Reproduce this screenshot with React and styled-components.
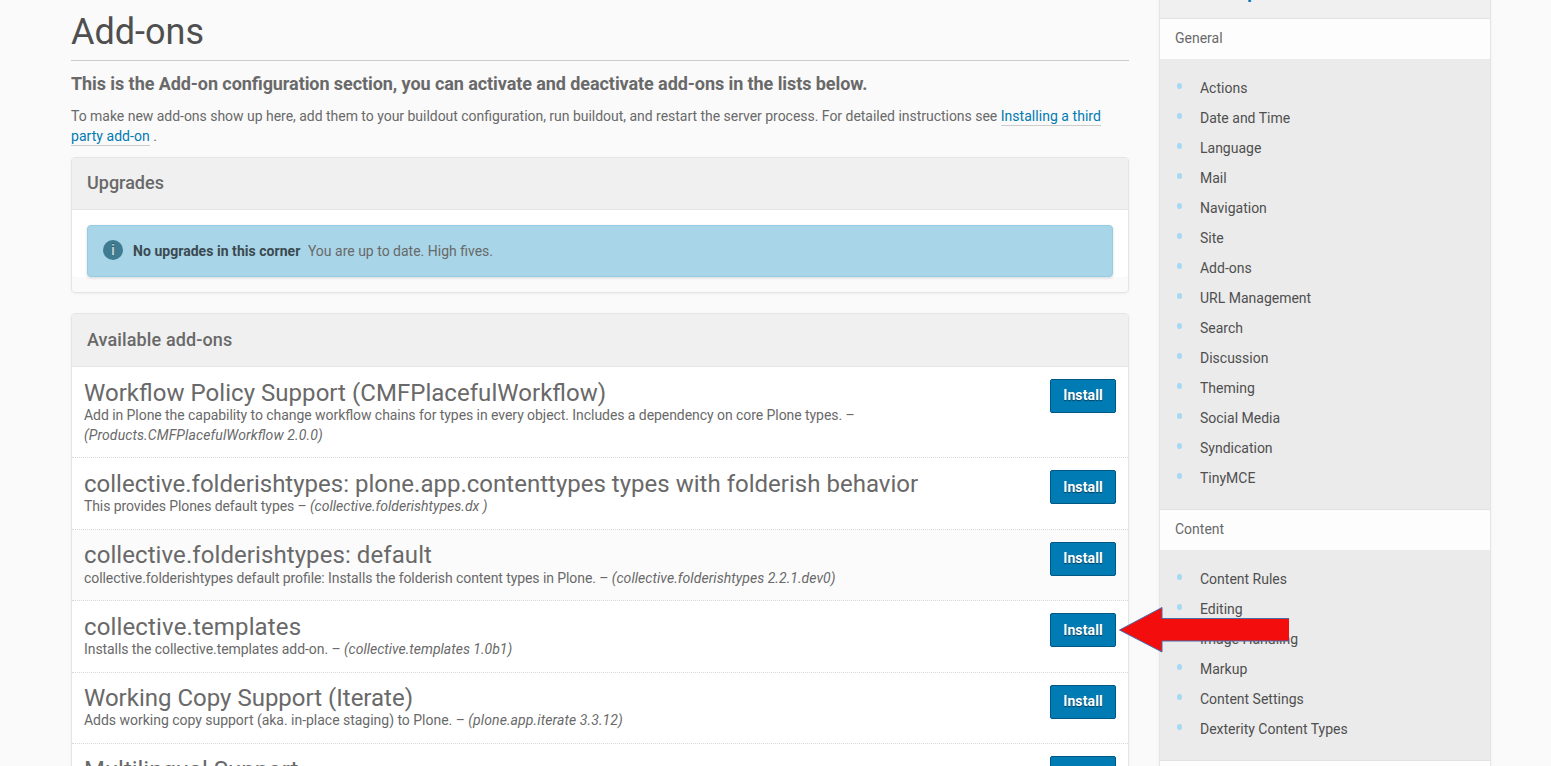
import React from "react";
import styled, { createGlobalStyle } from "styled-components";

const GlobalStyle = createGlobalStyle`
  * { box-sizing: border-box; }
  html, body { margin: 0; height: 100%; overflow: hidden; background: #fafafa; }
  body {
    font-family: Roboto, "Liberation Sans", sans-serif;
    font-size: 14px;
    line-height: 20px;
    color: #696969;
    font-feature-settings: "liga" 1;
  }
`;

const Page = styled.div`
  position: relative;
  display: flex;
  align-items: flex-start;
  gap: 30px;
  width: 1551px;
  height: 766px;
  padding-left: 71px;
  overflow: hidden;
`;

const Main = styled.main`
  width: 1058px;
  flex: none;
`;

const Title = styled.h1`
  margin: 0;
  height: 61px;
  padding-top: 12px;
  border-bottom: 1px solid #ccc;
  font-size: 36px;
  line-height: 40px;
  font-weight: 400;
  color: #4f4f4f;
`;

const Lead = styled.p`
  margin: 10px 0;
  font-size: 18px;
  line-height: 25px;
  font-weight: 700;
  letter-spacing: -0.074px;
`;

const Intro = styled.p`
  margin: 0 0 11px;
  letter-spacing: -0.025px;
`;

const Link = styled.a`
  color: #007bb3;
  text-decoration: none;
  border-bottom: 1px solid #ccc;
  padding-bottom: 1px;
  letter-spacing: 0.04px;
`;

const Panel = styled.section`
  margin-bottom: 20px;
  border: 1px solid #e5e5e5;
  border-radius: 4px;
  box-shadow: 0 1px 3px rgba(0, 0, 0, 0.05);
`;

const PanelHeader = styled.header`
  height: ${(p) => (p.$tall ? 53 : 52)}px;
  padding: ${(p) => (p.$tall ? 16 : 15)}px 15px 0;
  border-bottom: 1px solid #e5e5e5;
  border-radius: 3px 3px 0 0;
  background: #f0f0f0;
  font-size: 18px;
  line-height: 20px;
  font-weight: 500;
  letter-spacing: ${(p) => (p.$tall ? 0.12 : 0)}px;
`;

const UpgradeBody = styled.div`
  padding: 15px 15px 0;
  margin-bottom: 15px;
  background: #fff;
  border-radius: 0 0 4px 4px;
`;

const Alert = styled.div`
  display: flex;
  align-items: center;
  height: 52px;
  padding: 0 15px;
  border: 1px solid #95cbe3;
  border-radius: 4px;
  background: #a8d5e8;
  box-shadow: 0 1px 3px rgba(0, 0, 0, 0.15);
`;

const InfoBadge = styled.span`
  width: 20px;
  height: 20px;
  margin: -2px 10px 0 0;
  border-radius: 50%;
  background: #3f7b91;
  color: #eee;
  text-align: center;
  text-shadow: 0 -1px 0 rgba(0, 0, 0, 0.4);
`;

const AlertTitle = styled.strong`
  margin-right: 7.5px;
  color: #3b4a50;
  letter-spacing: 0.04px;
`;

const AddonList = styled.ul`
  margin: 0;
  padding: 0;
  list-style: none;
  background: #fff;
`;

const AddonRow = styled.li`
  display: flex;
  justify-content: space-between;
  align-items: flex-start;
  padding: 12px;
  border-bottom: 1px dotted #d9d9d9;
  background: ${(p) => (p.$hovered ? "#fbfbfb" : "#fff")};
`;

const AddonText = styled.div`
  width: 860px;
  padding-bottom: 0.6px;
`;

const AddonName = styled.h3`
  margin: 0;
  padding-top: 0.6px;
  font-size: 24px;
  line-height: 26.4px;
  font-weight: 400;
  white-space: nowrap;
  letter-spacing: ${(p) => p.$tracking}px;
`;

const AddonSummary = styled.p`
  width: 800px;
  margin: -1.2px 0 0;
  letter-spacing: ${(p) => p.$tracking}px;
`;

const AddonVersion = styled.em`
  letter-spacing: ${(p) => p.$tracking}px;
`;

const InstallButton = styled.button`
  width: 66px;
  height: 34px;
  padding: 0 0 1.2px;
  border: 1px solid #005985;
  border-radius: 2px;
  background: #007bb3;
  color: #fff;
  font: 700 14px/20px Roboto, sans-serif;
  letter-spacing: 0.12px;
  text-shadow: 0 1px 1px rgba(0, 0, 0, 0.5);
`;

const Sidebar = styled.aside`
  width: 332px;
  flex: none;
  margin-top: -34px;
  border: 1px solid #e5e5e5;
  border-top: 0;
  background: #ebebeb;
  box-shadow: 0 1px 3px rgba(0, 0, 0, 0.05);
`;

const SidebarTitle = styled.div`
  height: 52px;
  padding: 16px 15px 0;
  background: #f0f0f0;
  color: #007bb3;
  font-size: 18px;
  line-height: 20px;
  font-weight: 700;
  letter-spacing: -0.1px;
`;

const GroupHeading = styled.div`
  height: 41px;
  padding: 9px 15px;
  border-top: 1px solid #e2e2e2;
  background: #fdfdfd;
`;

const GroupList = styled.ul`
  margin: 0;
  padding: 14px 15px 16px;
  list-style: none;
`;

const GroupItem = styled.li`
  display: flex;
  align-items: center;
  height: 30px;
  color: #4f4f4f;

  &::before {
    content: "";
    flex: none;
    width: 5.4px;
    height: 6px;
    margin: -4px 17.8px 0 1.8px;
    border-radius: 2.5px;
    background: #a6d9f3;
  }
`;

const Pointer = styled.svg`
  position: absolute;
  left: 1118px;
  top: 605px;
`;

const addons = [
  {
    name: "Workflow Policy Support (CMFPlacefulWorkflow)",
    summary:
      "Add in Plone the capability to change workflow chains for types in every object. Includes a dependency on core Plone types.",
    version: "(Products.CMFPlacefulWorkflow 2.0.0)",
    tracking: [0.04, -0.058, 0.11],
  },
  {
    name: "collective.folderishtypes: plone.app.contenttypes types with folderish behavior",
    summary: "This provides Plones default types",
    version: "(collective.folderishtypes.dx )",
    tracking: [0.012, -0.1, 0.01],
  },
  {
    name: "collective.folderishtypes: default",
    summary: "collective.folderishtypes default profile: Installs the folderish content types in Plone.",
    version: "(collective.folderishtypes 2.2.1.dev0)",
    tracking: [0.08, -0.08, 0.05],
    hovered: true,
  },
  {
    name: "collective.templates",
    summary: "Installs the collective.templates add-on.",
    version: "(collective.templates 1.0b1)",
    tracking: [0.14, -0.07, 0],
  },
  {
    name: "Working Copy Support (Iterate)",
    summary: "Adds working copy support (aka. in-place staging) to Plone.",
    version: "(plone.app.iterate 3.3.12)",
    tracking: [0, -0.02, 0.1],
  },
  {
    name: "Multilingual Support",
    summary: "Install to enable multilingual content support.",
    version: "(plone.app.multilingual 5.6.2)",
    tracking: [-0.03, 0, 0],
  },
];

const groups = [
  ["General", ["Actions", "Date and Time", "Language", "Mail", "Navigation", "Site", "Add-ons", "URL Management", "Search", "Discussion", "Theming", "Social Media", "Syndication", "TinyMCE"]],
  ["Content", ["Content Rules", "Editing", "Image Handling", "Markup", "Content Settings", "Dexterity Content Types"]],
  ["Users", []],
];

export default function App() {
  return (
    <>
      <GlobalStyle />
      <Page>
        <Main>
          <Title>Add-ons</Title>
          <Lead>This is the Add-on configuration section, you can activate and deactivate add-ons in the lists below.</Lead>
          <Intro>
            To make new add-ons show up here, add them to your buildout configuration, run buildout, and restart the
            server process. For detailed instructions see <Link>Installing a third party add-on</Link> .
          </Intro>
          <Panel>
            <PanelHeader>Upgrades</PanelHeader>
            <UpgradeBody>
              <Alert>
                <InfoBadge>i</InfoBadge>
                <AlertTitle>No upgrades in this corner</AlertTitle>
                You are up to date. High fives.
              </Alert>
            </UpgradeBody>
          </Panel>
          <Panel>
            <PanelHeader $tall>Available add-ons</PanelHeader>
            <AddonList>
              {addons.map(({ name, summary, version, tracking, hovered }) => (
                <AddonRow key={name} $hovered={hovered}>
                  <AddonText>
                    <AddonName $tracking={tracking[0]}>{name}</AddonName>
                    <AddonSummary $tracking={tracking[1]}>
                      {summary} – <AddonVersion $tracking={tracking[2]}>{version}</AddonVersion>
                    </AddonSummary>
                  </AddonText>
                  <InstallButton>Install</InstallButton>
                </AddonRow>
              ))}
            </AddonList>
          </Panel>
        </Main>
        <Sidebar>
          <SidebarTitle>Site Setup</SidebarTitle>
          {groups.map(([heading, items]) => (
            <React.Fragment key={heading}>
              <GroupHeading>{heading}</GroupHeading>
              <GroupList>
                {items.map((item) => (
                  <GroupItem key={item}>{item}</GroupItem>
                ))}
              </GroupList>
            </React.Fragment>
          ))}
        </Sidebar>
        <Pointer width="172" height="50" viewBox="0 0 172 50">
          <path d="M171 13.5H44V2.5L1.5 25L44 47V36H171Z" fill="#f30d0d" />
          <path d="M171 13.5H44V2.5L1.5 25L44 47V36H171" fill="none" stroke="#4a6aa8" strokeWidth="1" />
        </Pointer>
      </Page>
    </>
  );
}
